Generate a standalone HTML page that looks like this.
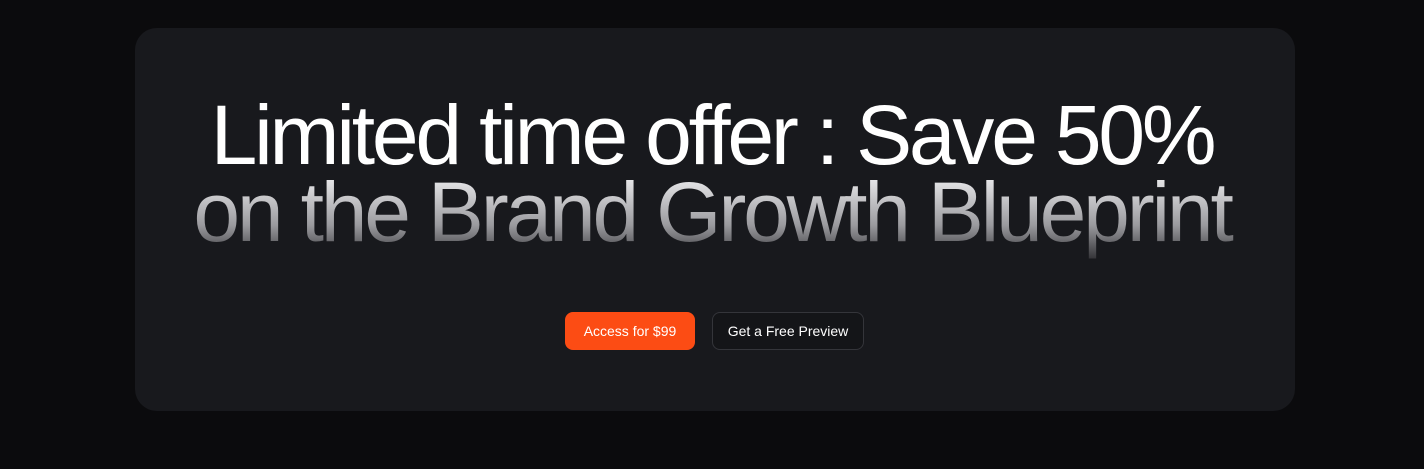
<!DOCTYPE html>
<html><head><style>
html,body{margin:0;padding:0;width:1424px;height:469px;background:#0b0b0d;overflow:hidden;font-family:"Liberation Sans",sans-serif}
.card{position:absolute;left:135px;top:28px;width:1160px;height:383px;background:#18191d;border-radius:22px}
.h{position:absolute;left:0;width:1424px;text-align:center;font-size:84px;letter-spacing:-3.2px;white-space:nowrap;line-height:84px}
.l1{top:93px;color:#fff}
.l2{top:170px;background:linear-gradient(180deg,#e6e6e8 10%,#9a9a9e 60%,#2a2a2e 100%);-webkit-background-clip:text;background-clip:text;color:transparent;height:92px}
.b{position:absolute;top:312px;height:38px;box-sizing:border-box;border-radius:8px;font-size:14px;line-height:38px;text-align:center;color:#fff}
.b1{left:565px;width:130px;background:#fc4c14}
.b2{left:712px;width:152px;background:#141518;border:1px solid #34353a;line-height:36px}
</style></head><body>
<div class="card"></div>
<div class="h l1">Limited time offer : Save 50%</div>
<div class="h l2">on the Brand Growth Blueprint</div>
<div class="b b1">Access for $99</div>
<div class="b b2">Get a Free Preview</div>
</body></html>
